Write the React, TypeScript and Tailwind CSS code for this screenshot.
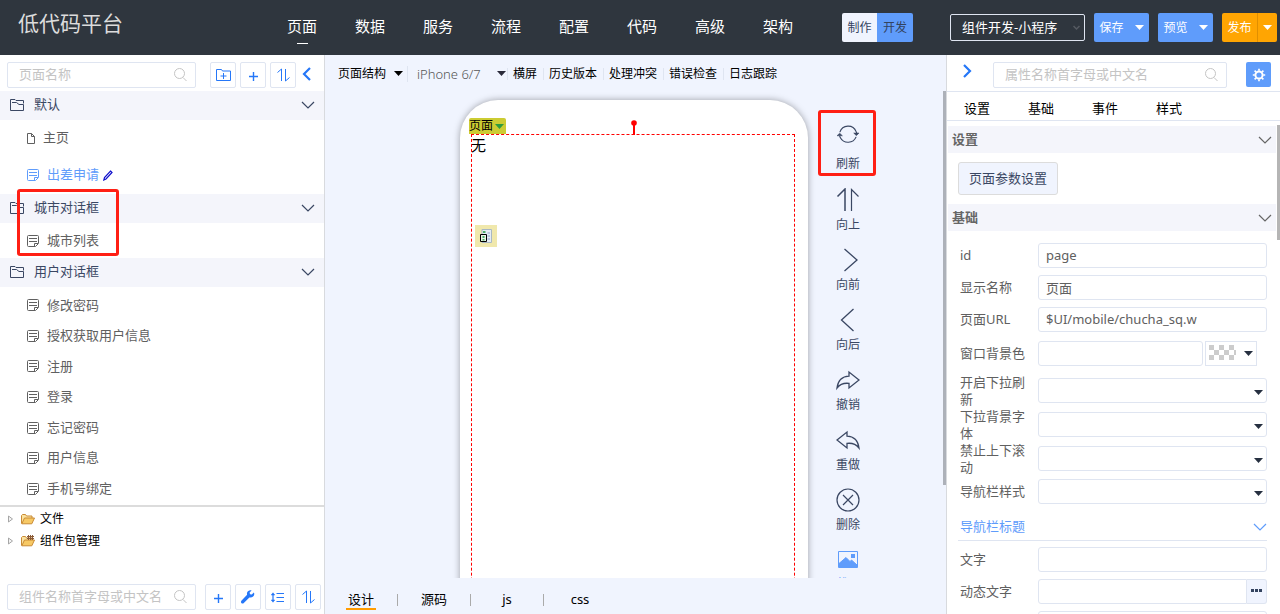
import React, { useState } from "react";

type IconProps = { className?: string };

const FolderIcon = ({ className = "" }: IconProps) => (
  <svg className={className} width="15" height="12" viewBox="0 0 15 12" fill="none" stroke="currentColor">
    <path d="M13.500 4.500v-3h-7.500L5 .5H.5v11h13V5.500h-4.500L6.500 3.500H2" />
  </svg>
);

const FolderPlusIcon = () => (
  <svg width="15" height="13" viewBox="0 0 15 13" fill="none" stroke="currentColor">
    <path d="M4 12.500H.5v-11h5l1 1.500h8v9.500H11M7.500 5v6M4.500 8h6M4 12.500h7" />
  </svg>
);

const FileIcon = () => (
  <svg width="8" height="11" viewBox="0 0 8 11" fill="none" stroke="currentColor">
    <path d="M.5.5h4l3 3v7h-7zM4.500.5v3h3" />
  </svg>
);

const NoteIcon = () => (
  <svg width="12" height="12" viewBox="0 0 12 12" fill="none" stroke="currentColor">
    <path d="M1.500.5h9a1 1 0 0 1 1 1V8.500L8.500 11.500h-7a1 1 0 0 1-1-1v-9a1 1 0 0 1 1-1zM2 3.500h8M2 6.500h8M7.500 11.500V8.500H11" />
  </svg>
);

const PencilIcon = () => (
  <svg width="10" height="11" viewBox="0 0 10 11" fill="none" stroke="#1010cc" strokeWidth="1.200">
    <path d="M7.500 1l1.500 1.500-6 6.500L.8 10l.7-2.500z" />
  </svg>
);

const SearchIcon = () => (
  <svg width="13" height="14" viewBox="0 0 13 14" fill="none" stroke="#c4c4c4">
    <circle cx="5.500" cy="5.500" r="5" />
    <path d="M9 9.500l3.500 3.500" />
  </svg>
);

const ChevronDown = ({ className = "" }: IconProps) => (
  <svg className={className} width="14" height="8" viewBox="0 0 14 8" fill="none" stroke="currentColor" strokeWidth="1.200">
    <path d="M1 1l6 6 6-6" />
  </svg>
);

const Chevron = ({ dir }: { dir: "left" | "right" }) => (
  <svg width="9" height="14" viewBox="0 0 9 14" fill="none" stroke="#2577f8" strokeWidth="2.200">
    <path d={dir === "left" ? "M8 1L2 7l6 6" : "M1 1l6 6-6 6"} />
  </svg>
);

const PlusIcon = () => (
  <svg className="mt-[3px]" width="9" height="9" viewBox="0 0 9 9" stroke="currentColor" strokeWidth="1.400">
    <path d="M4.500 0v9M0 4.500h9" />
  </svg>
);

const SortIcon = () => (
  <svg width="13" height="14" viewBox="0 0 13 14" fill="none" stroke="currentColor">
    <path d="M.5 4.500L4.500 1v12M8.500 1v12l4-3.500" />
  </svg>
);

const WrenchIcon = () => (
  <svg width="14" height="14" viewBox="0 0 14 14" fill="currentColor">
    <path d="M12.800 2.600l-2 2-1.800-.4-.4-1.700 2-2C8.800-.1 6.500.8 6 3c-.1.700 0 1.300.1 1.800L.6 10.600c-.8.800-.8 1.700-.2 2.400.6.7 1.700.7 2.400 0L8.400 7.400c2.300.8 4.800-.9 4.900-3.300 0-.6-.2-1.100-.5-1.500z" />
  </svg>
);

const LineHeightIcon = () => (
  <svg width="14" height="11" viewBox="0 0 14 11" fill="none" stroke="currentColor">
    <path d="M5.500 1.500H13M5.500 5.500H13M5.500 9.500H13M2 2v7" strokeWidth="1.200" />
    <path d="M.3 3L2 .8 3.700 3zM.3 8L2 10.200 3.700 8z" fill="currentColor" strokeWidth=".6" />
  </svg>
);

const GearIcon = () => (
  <svg width="14" height="14" viewBox="0 0 14 14" fill="none" stroke="#fff">
    <circle cx="7" cy="7" r="3.600" strokeWidth="2" />
    <path d="M7 .8v2M7 11.200v2M.8 7h2M11.200 7h2M2.600 2.600L4 4M10 10l1.400 1.400M11.400 2.600L10 4M4 10l-1.400 1.400" strokeWidth="1.700" />
  </svg>
);

const Triangle = ({ className = "" }: IconProps) => (
  <svg className={className} width="9" height="5" viewBox="0 0 9 5" fill="currentColor">
    <path d="M0 0h9L4.500 5z" />
  </svg>
);

const TreeArrow = () => (
  <svg width="5" height="8" viewBox="0 0 5 8" fill="#f4f4f4" stroke="#a6a6a6">
    <path d="M.5 1v6l4-3z" />
  </svg>
);

const OpenFolder = ({ grid = false }: { grid?: boolean }) => (
  <svg width="14" height="12" viewBox="0 0 14 12">
    <path d="M.5 10.500v-8l1-1h3l1 1.500h5.500v2" fill="#fbe3a0" stroke="#c98a34" />
    <path d="M.8 10.800L3.500 5h10l-2.700 5.800z" fill="#f7c965" stroke="#c98a34" />
    {grid && (
      <path d="M7.500 0v5M9.500 0v5M11.500 0v5M6 1.500h7M6 3.500h7" stroke="#8a5a35" />
    )}
  </svg>
);

const RefreshIcon = () => (
  <svg width="24" height="22" viewBox="0 0 24 22" fill="none" stroke="currentColor" strokeWidth="1.200">
    <path d="M3.500 8.500a9 9 0 0 1 17-.5l.8 2M20.500 13.500A9.200 9.200 0 0 1 4 14.500l-.8-2" />
    <path d="M18 9.500h5.500l-2.700 2.700zM.5 12.300h5.600L3.300 9.600z" fill="currentColor" strokeWidth=".6" />
  </svg>
);

const UpIcon = () => (
  <svg width="24" height="24" viewBox="0 0 24 24" fill="none" stroke="currentColor">
    <path d="M1.500 8.500L9 1v22" strokeWidth="1.500" />
    <path d="M15.500 23V1.500l7 7" strokeWidth="1.200" />
  </svg>
);

const ForwardIcon = () => (
  <svg width="24" height="24" viewBox="0 0 24 24" fill="none" stroke="currentColor" strokeWidth="1.300">
    <path d="M8.500 1L21 12 8.500 23" />
  </svg>
);

const BackIcon = () => (
  <svg width="24" height="24" viewBox="0 0 24 24" fill="none" stroke="currentColor" strokeWidth="1.300">
    <path d="M17.500 1L5.500 12l12 11" />
  </svg>
);

const ShareIcon = ({ flip = false }: { flip?: boolean }) => (
  <svg width="24" height="24" viewBox="0 0 24 24" fill="none" stroke="currentColor" strokeWidth="1.300">
    <path
      d={
        flip
          ? "M1 12L11 4v4.200c6.500.3 11 4.300 12 11.800-3-3.800-7-5.200-12-4.600V20z"
          : "M23 12L13 4v4.200C6.500 8.500 2 12.500 1 20c3-3.800 7-5.200 12-4.600V20z"
      }
    />
  </svg>
);

const DeleteIcon = () => (
  <svg width="24" height="24" viewBox="0 0 24 24" fill="none" stroke="currentColor" strokeWidth="1.200">
    <circle cx="12" cy="12" r="11" />
    <path d="M7 7l10 10M17 7L7 17" />
  </svg>
);

const PictureIcon = () => (
  <svg width="20" height="17" viewBox="0 0 20 17" fill="none" stroke="#5f9cfb">
    <path d="M.5.5h19v16H.5z" />
    <path d="M1 16v-3.500L8 6.500l4 4 1.500-1.500 5.500 5V16z" fill="#5f9cfb" />
    <rect x="13.500" y="3.500" width="3" height="3" fill="#5f9cfb" />
  </svg>
);

const navItems = ["页面", "数据", "服务", "流程", "配置", "代码", "高级", "架构"];
const userPages = ["修改密码", "授权获取用户信息", "注册", "登录", "忘记密码", "用户信息", "手机号绑定"];
const actions = ["横屏", "历史版本", "处理冲突", "错误检查", "日志跟踪"];
const tools = [
  { label: "向上", icon: <UpIcon /> },
  { label: "向前", icon: <ForwardIcon /> },
  { label: "向后", icon: <BackIcon /> },
  { label: "撤销", icon: <ShareIcon /> },
  { label: "重做", icon: <ShareIcon flip /> },
  { label: "删除", icon: <DeleteIcon /> },
];

const SplitButton = ({ label, orange = false }: { label: string; orange?: boolean }) => (
  <div className={`flex h-[29px] w-[55px] rounded-xs text-white ${orange ? "bg-[#ffa502]" : "bg-[#5f9cfb]"}`}>
    <button className="w-[35px] text-xs">{label}</button>
    <button
      aria-label={`${label}选项`}
      className={`flex flex-1 items-center justify-center ${orange ? "border-l border-[#e08f00]" : ""}`}
    >
      <Triangle />
    </button>
  </div>
);

const IconButton = ({ label, children }: { label: string; children: React.ReactNode }) => (
  <button
    aria-label={label}
    className="flex h-[26px] w-[26px] items-center justify-center rounded-xs border border-[#dfe5f1] text-[#2577f8]"
  >
    {children}
  </button>
);

const SearchBox = ({ placeholder, className = "" }: { placeholder: string; className?: string }) => (
  <label className={`flex h-[26px] items-center rounded-xs border border-[#dfe5f1] bg-white pr-2 pl-[11px] ${className}`}>
    <input
      aria-label={placeholder}
      placeholder={placeholder}
      className="w-full min-w-0 flex-1 bg-transparent text-[13px] outline-none placeholder:text-[#c4c4c4]"
    />
    <SearchIcon />
  </label>
);

const GroupHeader = ({ label }: { label: string }) => (
  <button className="flex h-[29px] w-full shrink-0 items-center bg-[#f4f5fb] pr-[9px] pb-[2px] pl-[10px] text-[#3a4763]">
    <FolderIcon />
    <span className="ml-[9px]">{label}</span>
    <ChevronDown className="ml-auto" />
  </button>
);

const PageItem = ({ label, className = "" }: { label: string; className?: string }) => (
  <a href="#" className={`flex items-center gap-2 pl-[27px] text-[#606060] ${className}`}>
    <NoteIcon />
    {label}
  </a>
);

const SectionHeader = ({ label }: { label: string }) => (
  <button className="flex h-[27px] w-full items-center justify-between bg-[#f4f5fb] pr-1 pl-1 font-bold text-[#666]">
    {label}
    <ChevronDown />
  </button>
);

const fieldClass = "h-[25px] w-full min-w-0 rounded-[3px] border border-[#dfe5f1] bg-white px-[7px] text-[13px] text-[#606060] outline-none";

const Row = ({ id, label, tall = false, children }: { id: string; label: string; tall?: boolean; children: React.ReactNode }) => (
  <div className={`flex items-center ${tall ? "h-[34px]" : "h-8"}`}>
    <label htmlFor={id} className="w-[78px] shrink-0 pt-px pr-2 leading-[17px]">
      {label}
    </label>
    {children}
  </div>
);

const TextField = ({ id, label, value = "" }: { id: string; label: string; value?: string }) => (
  <Row id={id} label={label}>
    <input id={id} defaultValue={value} className={fieldClass} />
  </Row>
);

const SelectField = ({ id, label, tall = false }: { id: string; label: string; tall?: boolean }) => (
  <Row id={id} label={label} tall={tall}>
    <div className="relative flex-1">
      <select id={id} className={`${fieldClass} block appearance-none`} />
      <Triangle className="pointer-events-none absolute top-3 right-1 text-[#263040]" />
    </div>
  </Row>
);

const Header = () => (
  <header className="flex h-[55px] shrink-0 items-center bg-[#2f363e] pr-[3px] text-white">
    <div className="w-[268px] pb-2 pl-[18px] text-[21px] text-[#dcdcdc]">低代码平台</div>
    <nav className="flex pb-[2px]">
      {navItems.map((n, i) => (
        <a key={n} href="#" className="flex w-[68px] flex-col items-center text-[15px] leading-6">
          {n}
          <span className={`mt-[5px] -mb-[5px] h-px w-[11px] ${i === 0 ? "bg-white" : ""}`} />
        </a>
      ))}
    </nav>
    <div className="ml-auto flex items-center gap-[9px]">
      <div className="mr-7 flex h-[29px] overflow-hidden rounded-xs text-xs text-[#33435f]">
        <button className="w-[35px] bg-[#f0f4fe]">制作</button>
        <button className="w-9 bg-[#5f9cfb]">开发</button>
      </div>
      <div className="relative">
        <select
          aria-label="项目类型"
          className="block h-[27px] w-[135px] appearance-none rounded-xs border border-[#dfe5f1] bg-transparent pl-[11px] text-[13px]"
        >
          <option>组件开发-小程序</option>
        </select>
        <svg className="pointer-events-none absolute top-[11px] right-[5px]" width="7" height="6" viewBox="0 0 7 6" fill="none" stroke="#565b62" strokeWidth="1.500">
          <path d="M.5 1l3 3 3-3" />
        </svg>
      </div>
      <SplitButton label="保存" />
      <SplitButton label="预览" />
      <SplitButton label="发布" orange />
    </div>
  </header>
);

const PagesPanel = () => (
  <aside className="flex w-[325px] shrink-0 flex-col border-r border-[#d8dade] bg-white">
    <div className="flex h-9 shrink-0 items-center gap-1 pt-[3px] pl-[7px]">
      <SearchBox placeholder="页面名称" className="mr-[10px] w-[189px]" />
      <IconButton label="新建分组">
        <FolderPlusIcon />
      </IconButton>
      <IconButton label="新建页面">
        <PlusIcon />
      </IconButton>
      <IconButton label="排序">
        <SortIcon />
      </IconButton>
      <button aria-label="收起" className="ml-[2px] pb-[2px]">
        <Chevron dir="left" />
      </button>
    </div>
    <div className="flex min-h-0 flex-1 flex-col">
      <GroupHeader label="默认" />
      <a href="#" className="flex h-9 items-center gap-2 pl-[27px] text-[#606060]">
        <FileIcon />
        主页
      </a>
      <a href="#" className="flex h-[38px] items-center gap-2 pl-[27px] text-[#5f9cfb]">
        <NoteIcon />
        <span className="-mr-1">出差申请</span>
        <PencilIcon />
      </a>
      <div className="relative">
        <GroupHeader label="城市对话框" />
        <PageItem label="城市列表" className="h-[35px]" />
        <div className="pointer-events-none absolute -top-[5px] left-[17px] h-[67px] w-[102px] rounded-[3px] border-3 border-[#ff1f14]" />
      </div>
      <GroupHeader label="用户对话框" />
      <div className="flex min-h-0 flex-1 flex-col pt-[3px] pb-px">
        {userPages.map((p) => (
          <PageItem key={p} label={p} className="flex-1" />
        ))}
      </div>
    </div>
    <div className="flex h-[109px] shrink-0 flex-col border-t-2 border-[#dcdcdc] text-xs text-black">
      <a href="#" className="flex h-[23px] items-center pl-2">
        <TreeArrow />
        <span className="mr-[5px] ml-2">
          <OpenFolder />
        </span>
        文件
      </a>
      <a href="#" className="flex h-[22px] items-center pl-2">
        <TreeArrow />
        <span className="mr-[5px] ml-2">
          <OpenFolder grid />
        </span>
        组件包管理
      </a>
      <div className="mt-auto mb-1 flex items-center gap-1 pl-[7px]">
        <SearchBox placeholder="组件名称首字母或中文名" className="mr-[5px] w-[189px]" />
        <IconButton label="添加组件">
          <PlusIcon />
        </IconButton>
        <IconButton label="维护">
          <WrenchIcon />
        </IconButton>
        <IconButton label="行高">
          <LineHeightIcon />
        </IconButton>
        <IconButton label="组件排序">
          <SortIcon />
        </IconButton>
      </div>
    </div>
  </aside>
);

const Designer = () => {
  const [tab, setTab] = useState("设计");
  return (
    <main className="flex min-w-0 flex-1 flex-col bg-[#f0f4fe] text-black">
      <div className="flex h-9 shrink-0 items-center pt-px pl-[13px] text-xs">
        <button className="flex items-center gap-2 pr-1">
          页面结构
          <Triangle />
        </button>
        <div className="relative border-l border-[#dfe5f1]">
          <select aria-label="设备" className="block w-[99px] appearance-none pl-[9px] text-[13px] leading-4 font-light text-[#555]">
            <option>iPhone 6/7</option>
          </select>
          <Triangle className="pointer-events-none absolute top-[5px] right-px text-[#2a2a3a]" />
        </div>
        {actions.map((a) => (
          <button key={a} className="mr-px border-l border-[#dfe5f1] px-[5px] leading-3">
            {a}
          </button>
        ))}
      </div>
      <div className="relative grid min-h-0 flex-1 grid-cols-[1fr_348px_138px] overflow-hidden">
        <div />
        <div className="mt-[9px] h-[700px] rounded-t-[38px] bg-white px-[11px] pt-[34px] shadow-[0_0_7px_rgba(0,0,0,0.35)]">
          <div className="relative mr-[2px] h-full border border-dashed border-[#ff0000]">
            <button className="absolute -top-[17px] -left-[3px] flex h-4 w-[37px] items-center gap-[2px] rounded-t-xs bg-[#cccc33] text-xs">
              页面
              <Triangle className="text-[#2f9a3f]" />
            </button>
            <svg className="absolute -top-[15px] left-[159px]" width="6" height="15" viewBox="0 0 6 15" fill="#f00">
              <circle cx="3" cy="3" r="2.800" />
              <path d="M2 3h2v12H2z" />
            </svg>
            <p className="-ml-px text-[15px] leading-5">无</p>
            <div className="absolute top-[90px] left-[3px] flex h-[22px] w-[22px] items-center justify-center bg-[#f0e8ac]">
              <svg width="14" height="14" viewBox="0 0 14 14" fill="none">
                <path d="M3 .5h9.500v13H3z" fill="#e6edf5" stroke="#a9b8c4" />
                <path d="M4 2h2.500v2H4z" fill="#4caf6a" />
                <path d="M8.500 4H11M8.500 7H11M8.500 10H11" stroke="#8aa0c8" />
                <path d="M1.500 5.500h6v7h-6z" fill="#e9f3e4" stroke="#000" />
                <path d="M3.500 7h2v2h-2zM3.500 10h2v1.500h-2z" fill="#4caf6a" />
              </svg>
            </div>
          </div>
        </div>
        <div className="flex flex-col pt-[19px] pl-[11px] text-xs text-[#3a4763]">
          <button className="mb-3 -ml-px flex h-[66px] w-[58px] shrink-0 flex-col items-center rounded-[3px] border-3 border-[#ff1f14] pt-[11px] pl-[2px]">
            <RefreshIcon />
            <span className="mt-[10px] leading-[18px]">刷新</span>
          </button>
          {tools.map((t) => (
            <button key={t.label} className="flex h-[60px] w-[58px] shrink-0 flex-col items-center">
              {t.icon}
              <span className="mt-1 leading-[18px]">{t.label}</span>
            </button>
          ))}
          <button className="flex w-[58px] shrink-0 flex-col items-center pt-[3px] text-[#5f9cfb]">
            <PictureIcon />
            <span className="mt-[7px] leading-[18px]">截图</span>
          </button>
        </div>
        <div className="absolute top-0 right-0 h-[394px] w-[3px] bg-[#adb1b9]" />
      </div>
      <div className="flex h-9 shrink-0 items-center pt-2 text-[13px]">
        {["设计", "源码", "js", "css"].map((t, i) => (
          <div key={t} className={`flex h-3 items-center justify-center ${i ? "w-[73px] border-l border-[#aaa]" : "w-[72px]"}`}>
            <button
              onClick={() => setTab(t)}
              className={`h-5 shrink-0 border-b-2 px-[2px] leading-[18px] ${tab === t ? "border-[#ff9c00]" : "border-transparent"}`}
            >
              {t}
            </button>
          </div>
        ))}
      </div>
    </main>
  );
};

const PropertiesPanel = () => (
  <aside className="relative flex w-[334px] shrink-0 flex-col overflow-hidden border-l border-[#d8dade] bg-white text-[#606060]">
    <div className="flex h-[37px] shrink-0 items-center border-b border-[#dfe5f1] pt-[3px] pr-[9px] pl-4">
      <button aria-label="展开" className="mb-2">
        <Chevron dir="right" />
      </button>
      <SearchBox placeholder="属性名称首字母或中文名" className="ml-[21px] w-[234px]" />
      <button aria-label="属性设置" className="ml-auto flex h-[25px] w-[25px] items-center justify-center rounded-xs bg-[#5f9cfb]">
        <GearIcon />
      </button>
    </div>
    <div className="-ml-[2px] flex h-[29px] shrink-0 border-b border-[#dfe5f1] text-black">
      {["设置", "基础", "事件", "样式"].map((t) => (
        <button key={t} className="w-16 pt-[6px]">
          {t}
        </button>
      ))}
    </div>
    <div className="flex shrink-0 flex-col pt-[5px] pr-1 pl-px">
      <SectionHeader label="设置" />
      <div className="py-[9px] pl-[10px]">
        <button className="h-[33px] rounded-[3px] border border-[#dcdcdc] bg-[#f0f4fe] px-[10px] text-[#3a4763]">页面参数设置</button>
      </div>
      <SectionHeader label="基础" />
    </div>
    <div className="flex flex-col pt-2 pr-[13px] pl-[13px]">
      <TextField id="prop-id" label="id" value="page" />
      <TextField id="prop-name" label="显示名称" value="页面" />
      <TextField id="prop-url" label="页面URL" value="$UI/mobile/chucha_sq.w" />
      <div className="mb-[3px] pt-[2px]">
        <Row id="prop-bg" label="窗口背景色">
          <input id="prop-bg" className={fieldClass} />
          <button aria-label="选择颜色" className="mr-[10px] ml-[2px] flex h-[25px] w-[52px] shrink-0 items-center justify-between border border-[#dfe5f1] pr-[3px] pl-[3px]">
            <svg width="27" height="16" viewBox="0 0 27 16" fill="#ccc">
              <path d="M0 0h5v5H0zM10 0h5v5h-5zM20 0h5v5h-5zM5 5h5v5H5zM15 5h5v5h-5zM25 5h2v5h-2zM0 10h5v5H0zM10 10h5v5h-5zM20 10h5v5h-5z" />
            </svg>
            <Triangle className="text-[#263040]" />
          </button>
        </Row>
      </div>
      <div className="pt-px">
        <SelectField id="prop-pull" label="开启下拉刷新" tall />
        <SelectField id="prop-pull-bg" label="下拉背景字体" tall />
        <SelectField id="prop-scroll" label="禁止上下滚动" tall />
        <SelectField id="prop-nav" label="导航栏样式" />
      </div>
      <button className="-ml-[2px] mb-[2px] flex h-[34px] items-center justify-between border-b border-[#dfe5f1] pt-[6px] pl-[2px] text-[#5f9cfb]">
        导航栏标题
        <ChevronDown />
      </button>
      <TextField id="prop-text" label="文字" />
      <Row id="prop-dynamic" label="动态文字">
        <div className="flex flex-1 items-center">
          <input id="prop-dynamic" className={`${fieldClass} rounded-r-none`} />
          <button aria-label="编辑动态文字" className="flex h-[25px] w-5 shrink-0 items-center justify-center gap-px rounded-r-[3px] border border-l-0 border-[#dfe5f1] bg-[#f0f4fe] pb-[2px]">
            <span className="h-[3px] w-[3px] bg-[#33435f]" />
            <span className="h-[3px] w-[3px] bg-[#33435f]" />
            <span className="h-[3px] w-[3px] bg-[#33435f]" />
          </button>
        </div>
      </Row>
      <TextField id="prop-color" label="" />
    </div>
    <div className="absolute top-[70px] right-0 h-[115px] w-[3px] bg-[#b5b5b5]" />
  </aside>
);

export default function App() {
  return (
    <div className="flex h-screen flex-col overflow-hidden bg-white font-['Noto_Sans','Noto_Sans_CJK_SC',sans-serif] text-[13px]">
      <Header />
      <div className="flex min-h-0 flex-1">
        <PagesPanel />
        <Designer />
        <PropertiesPanel />
      </div>
    </div>
  );
}
